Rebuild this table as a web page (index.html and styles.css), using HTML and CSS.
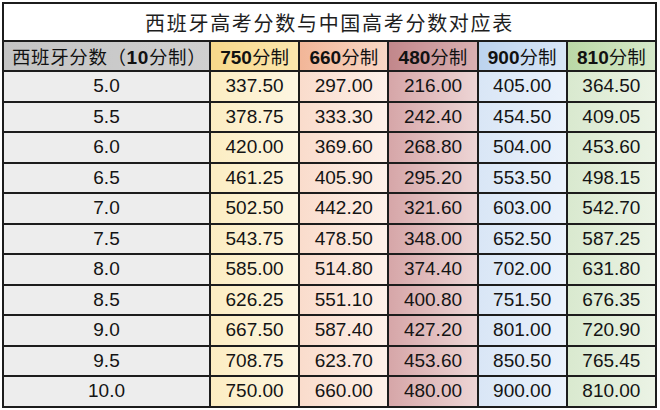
FILE: index.html
```html
<!DOCTYPE html>
<html lang="zh">
<head>
<meta charset="utf-8">
<link rel="stylesheet" href="styles.css">
</head>
<body>
<table class="score-table">
  <colgroup>
    <col class="col-es">
    <col class="col-n"><col class="col-n"><col class="col-n"><col class="col-n"><col class="col-n">
  </colgroup>
  <thead>
    <tr class="title-row"><th colspan="6" class="title">西班牙高考分数与中国高考分数对应表</th></tr>
    <tr class="head-row">
      <th class="h-es">西班牙分数（<b>10</b>分制）</th>
      <th class="h750"><b>750</b>分制</th>
      <th class="h660"><b>660</b>分制</th>
      <th class="h480"><b>480</b>分制</th>
      <th class="h900"><b>900</b>分制</th>
      <th class="h810"><b>810</b>分制</th>
    </tr>
  </thead>
  <tbody>
    <tr><td class="d-es">5.0</td><td class="d750">337.50</td><td class="d660">297.00</td><td class="d480">216.00</td><td class="d900">405.00</td><td class="d810">364.50</td></tr>
    <tr><td class="d-es">5.5</td><td class="d750">378.75</td><td class="d660">333.30</td><td class="d480">242.40</td><td class="d900">454.50</td><td class="d810">409.05</td></tr>
    <tr><td class="d-es">6.0</td><td class="d750">420.00</td><td class="d660">369.60</td><td class="d480">268.80</td><td class="d900">504.00</td><td class="d810">453.60</td></tr>
    <tr><td class="d-es">6.5</td><td class="d750">461.25</td><td class="d660">405.90</td><td class="d480">295.20</td><td class="d900">553.50</td><td class="d810">498.15</td></tr>
    <tr><td class="d-es">7.0</td><td class="d750">502.50</td><td class="d660">442.20</td><td class="d480">321.60</td><td class="d900">603.00</td><td class="d810">542.70</td></tr>
    <tr><td class="d-es">7.5</td><td class="d750">543.75</td><td class="d660">478.50</td><td class="d480">348.00</td><td class="d900">652.50</td><td class="d810">587.25</td></tr>
    <tr><td class="d-es">8.0</td><td class="d750">585.00</td><td class="d660">514.80</td><td class="d480">374.40</td><td class="d900">702.00</td><td class="d810">631.80</td></tr>
    <tr><td class="d-es">8.5</td><td class="d750">626.25</td><td class="d660">551.10</td><td class="d480">400.80</td><td class="d900">751.50</td><td class="d810">676.35</td></tr>
    <tr><td class="d-es">9.0</td><td class="d750">667.50</td><td class="d660">587.40</td><td class="d480">427.20</td><td class="d900">801.00</td><td class="d810">720.90</td></tr>
    <tr><td class="d-es">9.5</td><td class="d750">708.75</td><td class="d660">623.70</td><td class="d480">453.60</td><td class="d900">850.50</td><td class="d810">765.45</td></tr>
    <tr><td class="d-es">10.0</td><td class="d750">750.00</td><td class="d660">660.00</td><td class="d480">480.00</td><td class="d900">900.00</td><td class="d810">810.00</td></tr>
  </tbody>
</table>
</body>
</html>
```

FILE: styles.css
```css
html, body {
  margin: 0;
  padding: 0;
  background: #ffffff;
}

body {
  padding: 2px 0 0 2px;
  font-family: "Liberation Sans", "Noto Sans CJK SC", sans-serif;
  color: #141414;
}

.score-table {
  border-collapse: collapse;
  table-layout: fixed;
  width: 655px;
  border: 2px solid #1c1c1c;
}

.col-es { width: 207px; }

.score-table th,
.score-table td {
  border: 2px solid #1c1c1c;
  padding: 0;
  text-align: center;
  vertical-align: middle;
  white-space: nowrap;
}

.title-row { height: 38px; }
.head-row { height: 30px; }
.score-table tbody tr { height: 30.5px; }

.title {
  background: #ffffff;
  font-family: "Noto Sans CJK SC", sans-serif;
  font-weight: 400;
  font-size: 20px;
  letter-spacing: 1.7px;
  color: #1e1e1e;
}

.head-row th {
  font-family: "Noto Sans CJK SC", sans-serif;
  font-weight: 400;
  font-size: 18.5px;
  color: #111;
}

.head-row b {
  font-family: "Liberation Sans", sans-serif;
  font-weight: 700;
  font-size: 19px;
}

.h-es {
  text-align: left !important;
  padding-left: 8px !important;
  letter-spacing: 0.6px;
  background: linear-gradient(to right, #c4c4c4, #cfcfcf);
}

.h750 { background: linear-gradient(to right, #f8d88a, #fbe7ae); }
.h660 { background: linear-gradient(to right, #f2b698, #f9d8c6); }
.h480 { background: linear-gradient(to right, #c2878b, #d9b0b2); }
.h900 { background: linear-gradient(to right, #bcd3ee, #d8e6f6); }
.h810 { background: linear-gradient(to right, #bad8a6, #d6e9ca); }

.score-table td {
  font-size: 19px;
}

.d-es { background: #ededed; }
.d750 { background: linear-gradient(to right, #fcedc2, #fdf6e2); }
.d660 { background: linear-gradient(to right, #fadccc, #fdf0e9); }
.d480 { background: linear-gradient(to right, #d6a6a8, #edd5d5); }
.d900 { background: linear-gradient(to right, #d9e6f6, #ebf2fb); }
.d810 { background: linear-gradient(to right, #d9e9cf, #ebf3e5); }
```
